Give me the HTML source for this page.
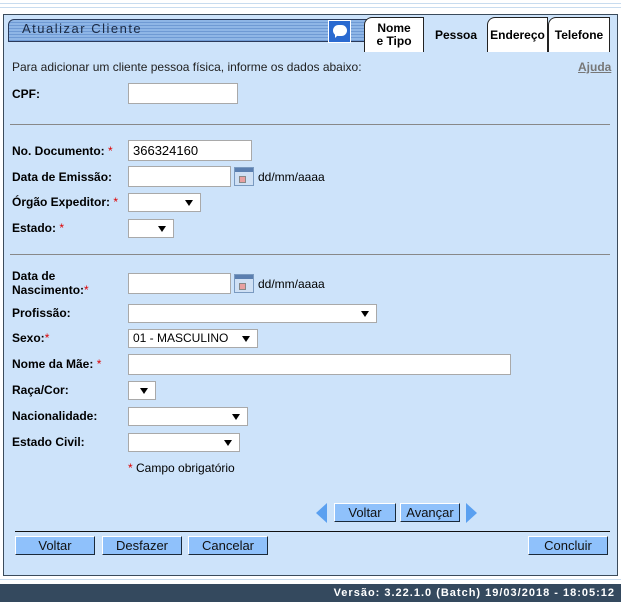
<!DOCTYPE html>
<html><head><meta charset="utf-8"><style>
*{margin:0;padding:0;box-sizing:border-box}
body{width:621px;height:602px;position:relative;background:#fff;font-family:"Liberation Sans",Arial,sans-serif;font-size:12px;color:#000;overflow:hidden}
.a{position:absolute}
.panel{left:3px;top:14px;width:615px;height:562px;background:#cde3fa;border:1px solid #3b4b5b}
.lbl{position:absolute;left:12px;font-weight:bold;font-size:12px;line-height:14px}
.req{color:#d00;font-weight:normal}
.in{position:absolute;background:#fff;border:1px solid #a9a9a9;height:21px}
.sel{position:absolute;background:#fff;border:1px solid #a9a9a9;height:19px;font-size:12px;line-height:17px;padding-left:4px}
.sel:after{content:"";position:absolute;right:7px;top:6px;border-left:4px solid transparent;border-right:4px solid transparent;border-top:6px solid #000}
.hr{position:absolute;height:1px;background:#888}
.btn{position:absolute;height:19px;background:#8fc1fb;border:1px solid;border-color:#fff #1a2a3a #1a2a3a #fff;text-align:center;font-size:13px;line-height:17px;color:#111}
.tab{position:absolute;top:17px;height:35px;background:#fff;border:1px solid #222;border-bottom:none;font-weight:bold;font-size:12px;text-align:center;border-radius:8px 0 0 0}
.cal{position:absolute;width:20px;height:19px;background:linear-gradient(#5b7fb0 0 4px,#cfe0f4 4px);border:1px solid #7a9ac0}
.cal:after{content:"";position:absolute;left:4px;top:8px;width:5px;height:5px;background:#e8a0a0;border:1px solid #888}
</style></head><body>
<div class="a" style="left:0;top:3px;width:621px;height:1px;background:#c8dcef"></div>
<div class="a" style="left:0;top:7px;width:621px;height:1px;background:#c8dcef"></div>
<div class="a panel"></div>
<div class="a" style="left:8px;top:19px;width:360px;height:23px;border:1px solid #2a3a5a;border-radius:6px 0 0 0;background:repeating-linear-gradient(#8fb6e6 0 2px,#6f9ad4 2px 3px)"></div>
<div class="a" style="left:22px;top:21px;font-size:13px;letter-spacing:1.5px;color:#1b2a44;line-height:16px">Atualizar Cliente</div>
<div class="a" style="left:328px;top:20px;width:23px;height:23px;background:#2a6ad0;border:1px solid #fff"><div style="position:absolute;left:4px;top:4px;width:14px;height:11px;background:#fff;border-radius:6px"></div><div style="position:absolute;left:6px;top:13px;border-left:4px solid #fff;border-bottom:4px solid transparent"></div></div>
<div class="tab" style="left:364px;width:60px;line-height:13px;padding-top:4px">Nome<br>e Tipo</div>
<div class="tab" style="left:425px;width:62px;background:#cde3fa;line-height:34px;border-color:#cde3fa">Pessoa</div>
<div class="tab" style="left:487px;width:61px;line-height:34px">Endereço</div>
<div class="tab" style="left:548px;width:62px;line-height:34px">Telefone</div>
<div class="a" style="left:12px;top:60px;font-size:12px;color:#222">Para adicionar um cliente pessoa física, informe os dados abaixo:</div>
<div class="a" style="left:578px;top:60px;font-size:12px;color:#777;font-weight:bold;text-decoration:underline">Ajuda</div>
<div class="lbl" style="top:87px">CPF:</div>
<div class="in" style="left:128px;top:83px;width:110px"></div>
<div class="hr" style="left:10px;top:124px;width:600px"></div>
<div class="lbl" style="top:144px">No. Documento: <span class="req">*</span></div>
<div class="in" style="left:128px;top:140px;width:124px;padding:2px 4px;font-size:13px;line-height:15px">366324160</div>
<div class="lbl" style="top:170px">Data de Emissão:</div>
<div class="in" style="left:128px;top:166px;width:103px"></div>
<div class="cal" style="left:234px;top:167px"></div>
<div class="a" style="left:258px;top:170px;font-size:12px">dd/mm/aaaa</div>
<div class="lbl" style="top:195px">Órgão Expeditor: <span class="req">*</span></div>
<div class="sel" style="left:128px;top:193px;width:73px"></div>
<div class="lbl" style="top:221px">Estado: <span class="req">*</span></div>
<div class="sel" style="left:128px;top:219px;width:46px"></div>
<div class="hr" style="left:10px;top:254px;width:600px"></div>
<div class="lbl" style="top:269px">Data de<br>Nascimento:<span class="req">*</span></div>
<div class="in" style="left:128px;top:273px;width:103px"></div>
<div class="cal" style="left:234px;top:274px"></div>
<div class="a" style="left:258px;top:277px;font-size:12px">dd/mm/aaaa</div>
<div class="lbl" style="top:306px">Profissão:</div>
<div class="sel" style="left:128px;top:304px;width:249px"></div>
<div class="lbl" style="top:331px">Sexo:<span class="req">*</span></div>
<div class="sel" style="left:128px;top:329px;width:130px">01 - MASCULINO</div>
<div class="lbl" style="top:357px">Nome da Mãe: <span class="req">*</span></div>
<div class="in" style="left:128px;top:354px;width:383px"></div>
<div class="lbl" style="top:383px">Raça/Cor:</div>
<div class="sel" style="left:128px;top:381px;width:28px"></div>
<div class="lbl" style="top:409px">Nacionalidade:</div>
<div class="sel" style="left:128px;top:407px;width:120px"></div>
<div class="lbl" style="top:435px">Estado Civil:</div>
<div class="sel" style="left:128px;top:433px;width:112px"></div>
<div class="a" style="left:128px;top:461px;font-size:12px"><span class="req">*</span> Campo obrigatório</div>
<div class="a" style="left:316px;top:503px;border-right:11px solid #5aa0f0;border-top:10px solid transparent;border-bottom:10px solid transparent"></div>
<div class="btn" style="left:334px;top:503px;width:62px">Voltar</div>
<div class="btn" style="left:400px;top:503px;width:60px">Avançar</div>
<div class="a" style="left:466px;top:503px;border-left:11px solid #5aa0f0;border-top:10px solid transparent;border-bottom:10px solid transparent"></div>
<div class="hr" style="left:15px;top:531px;width:595px;background:#111"></div>
<div class="btn" style="left:15px;top:536px;width:80px">Voltar</div>
<div class="btn" style="left:102px;top:536px;width:80px">Desfazer</div>
<div class="btn" style="left:188px;top:536px;width:80px">Cancelar</div>
<div class="btn" style="left:528px;top:536px;width:80px">Concluir</div>
<div class="a" style="left:0;top:579px;width:621px;height:1px;background:#c8dcef"></div>
<div class="a" style="left:0;top:584px;width:621px;height:18px;background:#34495e"></div>
<div class="a" style="right:6px;top:587px;color:#fff;font-weight:bold;font-size:11px;letter-spacing:1px;line-height:13px">Versão: 3.22.1.0 (Batch) 19/03/2018 - 18:05:12</div>
</body></html>
